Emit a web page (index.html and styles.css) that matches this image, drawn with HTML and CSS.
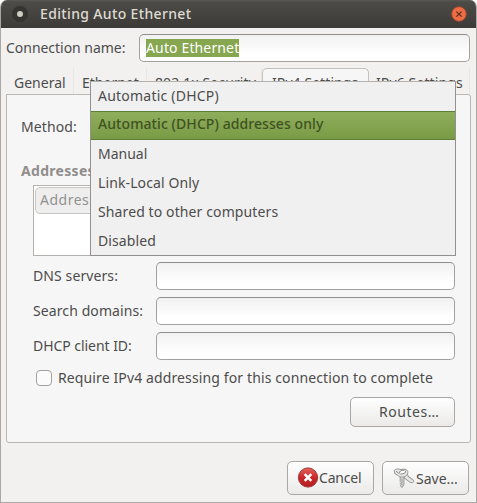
FILE: index.html
```
<!DOCTYPE html>
<html lang="en">
<head>
  <meta charset="utf-8" />
  <title>Editing Auto Ethernet</title>
  <link rel="stylesheet" href="styles.css">
</head>
<body>
  <div class="window">
    <div class="titlebar">
      <span class="title-dot"></span>
      <span class="title">Editing Auto Ethernet</span>
      <svg class="close" viewBox="0 0 16 16" width="16" height="16">
        <circle cx="8" cy="8" r="7.3" fill="#ec6c45" stroke="#a8442a" stroke-width=".8" />
        <path d="M5.4 5.6l5.2 5M10.6 5.6l-5.2 5" stroke="#5a2a1c" stroke-width="1.2" />
      </svg>
    </div>

    <div class="name-row">
      <label class="name-label">Connection name:</label>
      <div class="entry"><span class="selected">Auto Ethernet</span></div>
    </div>

    <div class="tabs">
      <div class="tab tab-general">General</div>
      <div class="tab tab-ethernet">Ethernet</div>
      <div class="tab tab-security">802.1x Security</div>
      <div class="tab tab-ipv4 active">IPv4 Settings</div>
      <div class="tab tab-ipv6">IPv6 Settings</div>
    </div>

    <div class="panel">
      <div class="method">Method:</div>
      <div class="addresses">Addresses</div>
      <div class="tree"><div class="tree-header">Address</div></div>
      <div class="field"><label>DNS servers:</label><div class="entry"></div></div>
      <div class="field"><label>Search domains:</label><div class="entry"></div></div>
      <div class="field"><label class="client">DHCP client ID:</label><div class="entry"></div></div>
      <div class="check-row">
        <span class="checkbox"></span>
        <span class="require">Require IPv4 addressing for this connection to complete</span>
      </div>
      <div class="button routes"><span>Routes…</span></div>

      <div class="menu">
        <div class="item dhcp">Automatic (DHCP)</div>
        <div class="item highlighted">Automatic (DHCP) addresses only</div>
        <div class="item manual">Manual</div>
        <div class="item">Link-Local Only</div>
        <div class="item">Shared to other computers</div>
        <div class="item">Disabled</div>
      </div>
    </div>

    <div class="actions">
      <div class="button cancel">
        <svg viewBox="0 0 22 22" width="22" height="22">
          <defs>
            <linearGradient id="red" x1="0" y1="0" x2="0" y2="1">
              <stop offset="0" stop-color="#e4625c" />
              <stop offset=".5" stop-color="#c92a2a" />
              <stop offset="1" stop-color="#b31d20" />
            </linearGradient>
          </defs>
          <circle cx="11" cy="10.5" r="9.6" fill="url(#red)" stroke="#a03030" />
          <path d="M7.7 7.2l6.6 6.6M14.3 7.2l-6.6 6.6" stroke="#fff" stroke-width="2.6" />
        </svg>
        <span>Cancel</span>
      </div>
      <div class="button save">
        <svg viewBox="0 0 22 22" width="22" height="22" fill="#e6e6e4" stroke="#8b8b88" stroke-width=".9">
          <path d="M10.5 7l3.3-1.8 2 4.1 1.6.3.5 1.3 1.6.2 1.3 2.3-1.3 1.4-2.3-.4-6.1-4.5z" />
          <path d="M7.2 8h3.7v8.6l-1.7 2.9-2-1.7 1-1.1-1-1 .9-1.2-.9-1z" />
          <path d="M1.2 2.5C2.8.4 6 .7 8 1.7c2.6-1.3 6-.5 6.7 1.7.6 2.6-1.4 5.3-4.5 5.6-2.6.5-4.6-.3-5.6-1.9L1.9 5.8z" />
          <ellipse cx="9.5" cy="4.1" rx="3.2" ry="1.8" fill="#fafafa" transform="rotate(-15 9.5 4.1)" />
          <path d="M3 3.1l2.9 2.4M9 10.5v7" fill="none" />
        </svg>
        <span>Save...</span>
      </div>
    </div>
  </div>
</body>
</html>
```
FILE: styles.css
```
* {
  box-sizing: border-box;
}
body {
  margin: 0;
  background: #fff;
  font-family: "Noto Sans", "Open Sans", sans-serif;
  font-size: 14px;
  line-height: 20px;
  color: #4c4c4c;
  white-space: nowrap;
}
.window {
  width: 477px;
  height: 503px;
  border: 1px solid #aaa8a5;
  border-top: none;
  border-radius: 7px 7px 0 0;
  background: #f2f1f0;
  overflow: hidden;
}
.titlebar {
  height: 28px;
  margin: 0 -1px;
  padding: 0 10px 0 12px;
  display: flex;
  align-items: center;
  background: linear-gradient(#5b5954 0, #4d4b47 2px, #3c3b37);
  color: #dfdbd2;
}
.title-dot {
  width: 16px;
  height: 16px;
  border: 5px solid #353430;
  border-radius: 50%;
  background: #d0cdc5;
}
.title {
  flex: 1;
  margin-left: 12px;
  font-weight: 500;
  letter-spacing: 0.35px;
}
.name-row {
  display: flex;
  align-items: center;
  padding: 6px 6px 0 5px;
}
.name-label {
  width: 133px;
  letter-spacing: -0.03px;
}
.entry {
  flex: 1;
  height: 28px;
  padding: 4px 6px;
  border: 1px solid #a3a09d;
  border-top-color: #918e8b;
  border-radius: 5px;
  background: linear-gradient(#f1f1f1, #fff 75%);
  line-height: 18px;
}
.selected {
  display: inline-block;
  height: 18px;
  background: #86a650;
  color: #fff;
  letter-spacing: 0.14px;
}
.tabs {
  display: flex;
  height: 32px;
  padding: 6px 5px 0;
}
.tab {
  padding: 5px 0 0 8px;
  border-right: 1px solid #e8e6e4;
}
.tab-general {
  width: 68px;
}
.tab-ethernet {
  width: 73px;
}
.tab-security {
  width: 115px;
  letter-spacing: 0.1px;
}
.tab-ipv4 {
  width: 107px;
  padding-left: 9px;
  letter-spacing: 0.08px;
}
.tab-ipv6 {
  width: 101px;
  padding-left: 7px;
  letter-spacing: 0.12px;
}
.active {
  padding-top: 4px;
  border: 1px solid #c4c1be;
  border-bottom: none;
  border-radius: 5px 5px 0 0;
  background: #f7f6f6;
}
.panel {
  position: relative;
  height: 349px;
  margin: 0 5px;
  padding: 22px 15px 0 14px;
  border: 1px solid #bab7b4;
  border-radius: 0 3px 3px 3px;
  background: #f7f6f6;
}
.method {
  letter-spacing: 0.1px;
}
.addresses {
  margin-top: 24px;
  font-weight: bold;
  letter-spacing: 0.3px;
  color: #8f8e8c;
}
.tree {
  height: 71px;
  margin: 4px 0 6px 12px;
  padding: 1px;
  border: 1px solid #b4b1ae;
  background: #fff;
}
.tree-header {
  height: 27px;
  padding: 2px 4px;
  border: 1px solid #c8c6c3;
  border-radius: 5px;
  background: #efeeee;
  color: #929190;
  letter-spacing: 0.5px;
}
.field {
  display: flex;
  align-items: center;
  margin: 0 0 7px 12px;
}
.field label {
  width: 123px;
  letter-spacing: 0.1px;
}
.field .client {
  letter-spacing: -0.05px;
}
.check-row {
  display: flex;
  align-items: center;
  margin: 8px 0 9px 15px;
}
.checkbox {
  width: 16px;
  height: 16px;
  margin-right: 6px;
  border: 1px solid #a3a09d;
  border-radius: 4px;
  background: #fbfbfb;
}
.require {
  letter-spacing: 0.12px;
}
.button {
  display: flex;
  align-items: center;
  border: 1px solid #aaa7a4;
  border-radius: 5px;
  background: linear-gradient(#fefefe, #ebeae9);
}
.routes {
  width: 105px;
  height: 30px;
  margin-left: auto;
  padding-left: 28px;
  letter-spacing: 0.55px;
}
.menu {
  position: absolute;
  left: 83px;
  top: -14px;
  width: 366px;
  height: 175px;
  border: 1px solid #93918f;
  border-top-color: #b4b1ae;
  background: #f1f0f0;
}
.item {
  height: 29px;
  padding: 4px 7px;
  letter-spacing: 0.11px;
}
.dhcp {
  letter-spacing: 0.22px;
}
.manual {
  letter-spacing: 0;
}
.highlighted {
  border-top: 1px solid #5f7e35;
  border-bottom: 1px solid #5f7e35;
  padding-top: 2px;
  background: linear-gradient(#8fae5d, #7a9b45);
  color: #3f5222;
  font-weight: 500;
  letter-spacing: 0.08px;
}
.actions {
  display: flex;
  justify-content: flex-end;
  gap: 8px;
  padding: 18px 7px 0 0;
}
.actions .button {
  width: 87px;
  height: 34px;
}
.cancel {
  padding-left: 9px;
  letter-spacing: -0.2px;
}
.save {
  padding: 1px 0 0 10px;
}
.save span {
  margin-left: 1px;
}
```
